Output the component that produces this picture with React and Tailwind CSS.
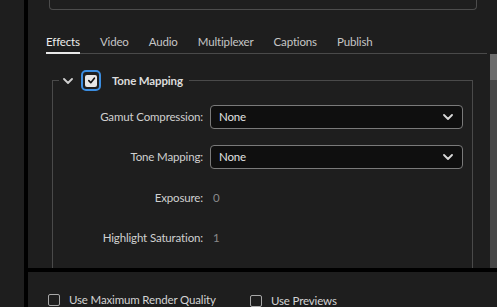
import React from 'react';

const tabs = ['Effects', 'Video', 'Audio', 'Multiplexer', 'Captions', 'Publish'];

function Chevron({ className }) {
    return (
        <svg viewBox="0 0 10 6" className={className} fill="none">
            <path d="M1 1 L5 5 L9 1" stroke="currentColor" strokeWidth="1.8" strokeLinecap="round" strokeLinejoin="round" />
        </svg>
    );
}

function SelectBox({ value }) {
    return (
        <div className="w-[253px] h-[24px] rounded-[4px] border border-[#7a7a7a] bg-[#0f0f0f] flex items-center justify-between pl-[8px] pr-[9px]">
            <span className="text-[#e2e2e2]">{value}</span>
            <Chevron className="w-[10px] h-[6px] text-[#d8d8d8]" />
        </div>
    );
}

function Row({ label, children, className = '' }) {
    return (
        <div className={'flex items-center h-[24px] shrink-0 ' + className}>
            <div className="w-[150px] text-right text-[#d0d0d0]">{label}</div>
            <div className="ml-[7px]">{children}</div>
        </div>
    );
}

function SmallCheck({ label }) {
    return (
        <div className="flex items-center">
            <div className="w-[12px] h-[12px] border-[1.5px] border-[#a8a8a8] rounded-[2px]" />
            <span className="ml-[9px] text-[#d4d4d4]">{label}</span>
        </div>
    );
}

export default function App() {
    return (
        <div
            className="w-[497px] h-[307px] bg-[#1e1e1e] flex overflow-hidden text-[11.5px] tracking-[-0.15px] leading-none"
            style={{ fontFamily: 'Lato, "Noto Sans", sans-serif' }}
        >
            <div className="w-[24px] shrink-0" />
            <div className="w-[4px] shrink-0 bg-black" />

            <div className="flex-1 flex flex-col">
                {/* upper panel */}
                <div className="h-[268px] shrink-0 flex flex-col overflow-hidden">
                    <div className="shrink-0 ml-[21px] w-[428px] h-[10px] border border-t-0 border-[#4c4c4c] rounded-b-[4px]" />

                    <div className="shrink-0 ml-[18px] w-[441px] mt-[26px] flex border-b border-[#4a4a4a] h-[18px]">
                        {tabs.map((t, i) => (
                            <div
                                key={t}
                                className={
                                    i === 0
                                        ? 'h-[18px] flex items-start mr-[20px] border-b-2 border-[#e8e8e8] text-[#ececec]'
                                        : 'h-full flex items-start mr-[20px] text-[#c6c6c6]'
                                }
                            >
                                {t}
                            </div>
                        ))}
                    </div>

                    <div className="flex-1 flex min-h-0">
                        <div className="flex-1 pt-[16px] overflow-hidden">
                            <fieldset className="ml-[24px] mr-[17px] border border-b-0 border-[#4a4a4a] h-[198px] m-0 p-0">
                                <legend className="ml-[6px] px-[4px] flex items-center">
                                    <Chevron className="w-[10px] h-[6px] text-[#cfcfcf]" />
                                    <div className="ml-[8px] w-[20px] h-[21px] rounded-[5px] border-2 border-[#3b8de0] flex items-center justify-center">
                                        <div className="w-[12px] h-[12px] rounded-[2px] bg-[#e6e6e6] flex items-center justify-center">
                                            <svg viewBox="0 0 10 10" className="w-[9px] h-[9px]" fill="none">
                                                <path d="M2 5.2 L4.2 7.4 L8.2 2.4" stroke="#111" strokeWidth="1.8" strokeLinecap="round" strokeLinejoin="round" />
                                            </svg>
                                        </div>
                                    </div>
                                    <span className="ml-[11px] mr-[2px] font-bold text-[#dcdcdc]">Tone Mapping</span>
                                </legend>

                                <div className="pt-[14px] flex flex-col gap-[16px]">
                                    <Row label="Gamut Compression:">
                                        <SelectBox value="None" />
                                    </Row>
                                    <Row label="Tone Mapping:">
                                        <SelectBox value="None" />
                                    </Row>
                                    <Row label="Exposure:" className="mt-[1px]">
                                        <span className="ml-[3px] text-[#8a8a8a]">0</span>
                                    </Row>
                                    <Row label="Highlight Saturation:">
                                        <span className="ml-[3px] text-[#8a8a8a]">1</span>
                                    </Row>
                                </div>
                            </fieldset>
                        </div>
                        <div className="w-[7px] flex flex-col bg-[#474747]">
                            <div className="h-[26px] bg-[#6c6c6c]" />
                        </div>
                    </div>
                </div>

                <div className="h-[4px] shrink-0 bg-black" />

                {/* bottom options */}
                <div className="flex-1 pt-[22px] pl-[20px] flex">
                    <div className="w-[202px]">
                        <SmallCheck label="Use Maximum Render Quality" />
                    </div>
                    <SmallCheck label="Use Previews" />
                </div>
            </div>
        </div>
    );
}
